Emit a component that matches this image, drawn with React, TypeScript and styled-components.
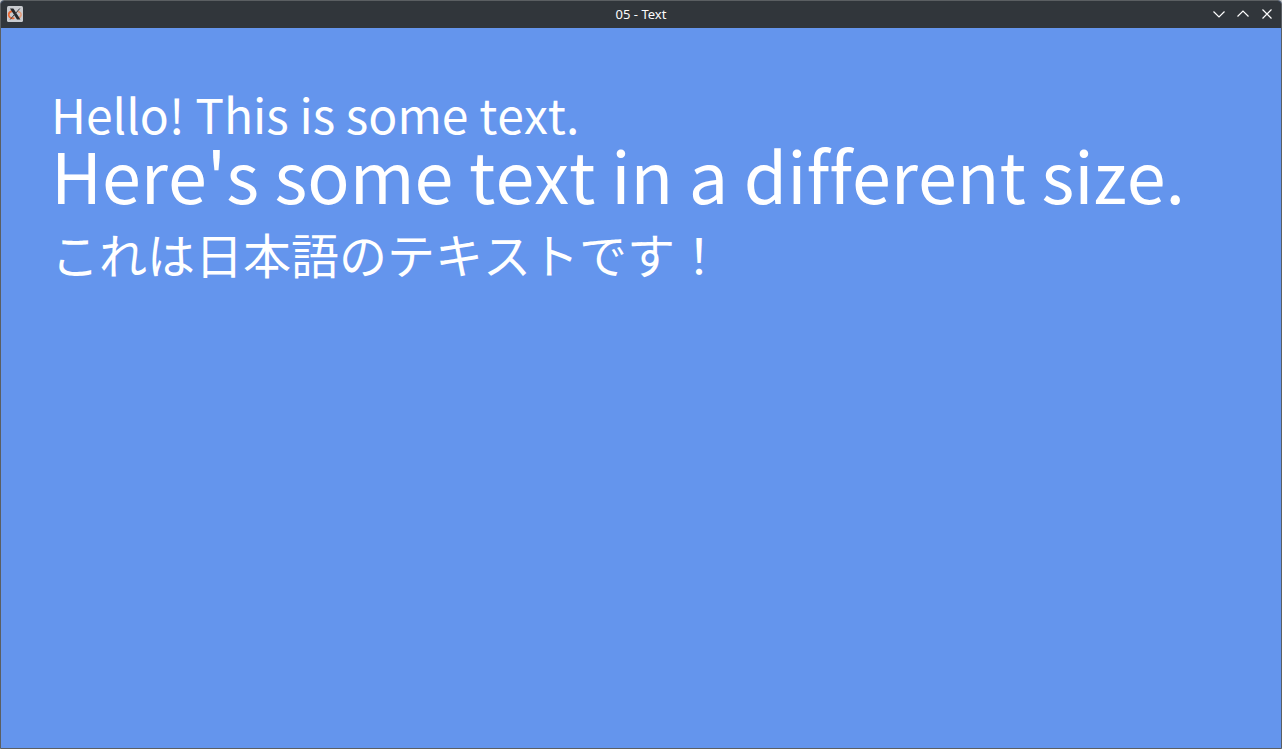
import React from "react";
import styled, { createGlobalStyle } from "styled-components";

const GlobalStyle = createGlobalStyle`
  * { box-sizing: border-box; }
  body { margin: 0; background: #c8cacc; }
`;

const Window = styled.div`
  display: flex;
  flex-direction: column;
  min-height: 100vh;
  border: 1px solid #5b5f62;
  border-radius: 4px 4px 0 0;
  background: #6495ed;
  overflow: hidden;
`;

const TitleBar = styled.header`
  display: grid;
  grid-template-columns: 1fr auto 1fr;
  align-items: center;
  height: 27px;
  padding: 0 6px 1px 6px;
  background: #31363b;
  color: #fcfcfc;
`;

const AppIcon = styled.svg`
  display: block;
  width: 16px;
  height: 16px;
`;

const Title = styled.h1`
  margin: 0;
  font: 400 13px/20px "Noto Sans", sans-serif;
`;

const Controls = styled.div`
  display: flex;
  justify-content: flex-end;
  gap: 8px;
`;

const ControlButton = styled.button`
  width: 16px;
  height: 16px;
  padding: 0;
  border: 0;
  background: none;
  color: inherit;

  svg { display: block; }
`;

const Canvas = styled.main`
  flex: 1;
  padding: 50px;
  color: #fff;
  font-family: "Noto Sans CJK JP", sans-serif;
  font-kerning: none;
  font-variant-ligatures: none;
`;

const Line = styled.p<{ $size: number; $height: number }>`
  margin: 0;
  font-size: ${(p) => p.$size}px;
  line-height: ${(p) => p.$height}px;
`;

const controls = [
  { label: "Minimize", d: "M2.5 5.5 8 11l5.5-5.5" },
  { label: "Maximize", d: "M2.5 10.5 8 5l5.5 5.5" },
  { label: "Close", d: "M3.5 3.5l9 9M12.5 3.5l-9 9" },
];

export default function App() {
  return (
    <>
      <GlobalStyle />
      <Window>
        <TitleBar>
          <AppIcon viewBox="1 1 16 16" aria-hidden="true">
            <rect x="1" y="1" width="16" height="16" rx="1.5" fill="#c9cbcf" />
            <path d="M6.6 6C4 6.5 2.4 8.4 2.8 10.5c.5 2.2 3 3.2 5.6 2.7" stroke="#ec6a34" strokeWidth="1.8" fill="none" />
            <path d="M11.5 6.4c2.6.4 4 1.9 3.6 3.6-.3 1.6-1.8 2.7-3.4 3" stroke="#e59a78" strokeWidth="1.5" fill="none" />
            <path d="M4 3.5h3.4l7 11h-3.4z" fill="#26282b" />
            <path d="M13.8 3.5 4.2 14.5" stroke="#33363a" strokeWidth="1" fill="none" />
          </AppIcon>
          <Title>05 - Text</Title>
          <Controls>
            {controls.map((c) => (
              <ControlButton key={c.label} type="button" aria-label={c.label}>
                <svg width="16" height="16" viewBox="0 0 16 16" fill="none" stroke="currentColor" strokeWidth="1.2">
                  <path d={c.d} />
                </svg>
              </ControlButton>
            ))}
          </Controls>
        </TitleBar>
        <Canvas>
          <Line $size={48} $height={70}>Hello! This is some text.</Line>
          <Line $size={70} $height={52}>Here's some text in a different size.</Line>
          <Line $size={48} $height={106} lang="ja">これは日本語のテキストです！</Line>
        </Canvas>
      </Window>
    </>
  );
}
